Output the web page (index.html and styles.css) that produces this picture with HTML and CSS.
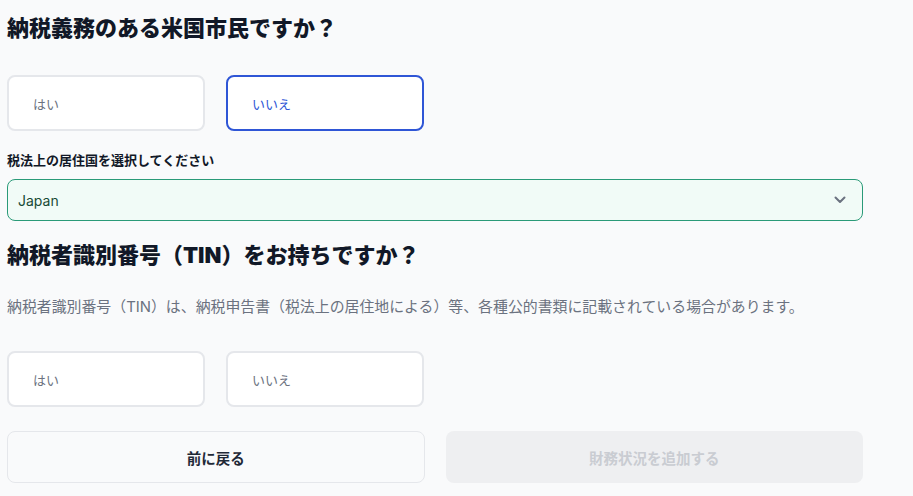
FILE: index.html
```html
<!DOCTYPE html>
<html lang="ja">
<head>
<meta charset="utf-8">
<link rel="stylesheet" href="styles.css">
</head>
<body>
<div class="page">
  <h1 class="title t1">納税義務のある米国市民ですか？</h1>
  <div class="choices c1">
    <button class="choice">はい</button>
    <button class="choice selected">いいえ</button>
  </div>
  <label class="label">税法上の居住国を選択してください</label>
  <div class="select">
    <span class="select-value">Japan</span>
    <svg class="chev" width="12" height="8" viewBox="0 0 12 8"><path d="M1.5 1.5 L6 6 L10.5 1.5" fill="none" stroke="#6b7280" stroke-width="2" stroke-linecap="round" stroke-linejoin="round"/></svg>
  </div>
  <h2 class="title t2">納税者識別番号（TIN）をお持ちですか？</h2>
  <p class="desc">納税者識別番号（TIN）は、納税申告書（税法上の居住地による）等、各種公的書類に記載されている場合があります。</p>
  <div class="choices c2">
    <button class="choice">はい</button>
    <button class="choice">いいえ</button>
  </div>
  <div class="actions">
    <button class="btn back">前に戻る</button>
    <button class="btn next" disabled>財務状況を追加する</button>
  </div>
</div>
</body>
</html>
```
FILE: styles.css
```css
* { box-sizing: border-box; }
html, body {
  margin: 0;
  background: #f9fafb;
}
body {
  font-family: Inter, "Noto Sans CJK JP", sans-serif;
  color: #111827;
}
.page {
  width: 870px;
  padding: 12px 7px 0 7px;
  display: flex;
  flex-direction: column;
}
.title {
  margin: 0;
  font-size: 22px;
  line-height: 32px;
  font-weight: 900;
  color: #111827;
}
.choices {
  display: grid;
  grid-template-columns: 198px 198px;
  gap: 21px;
}
.c1 { margin-top: 31px; }
.choice {
  height: 56px;
  background: #ffffff;
  border: 2px solid #e5e7eb;
  border-radius: 8px;
  text-align: left;
  padding: 0 0 0 24px;
  font-family: Inter, "Noto Sans CJK JP", sans-serif;
  font-size: 13px;
  color: #6b7280;
}
.choice.selected {
  border-color: #2f56d6;
  color: #2f56d6;
}
.label {
  margin-top: 19px;
  font-size: 13px;
  line-height: 20px;
  font-weight: 700;
  color: #111827;
}
.select {
  margin-top: 9px;
  width: 856px;
  height: 42px;
  border: 1px solid #2a9a78;
  border-radius: 8px;
  background: #f1fbf7;
  display: flex;
  align-items: center;
  justify-content: space-between;
  padding: 0 16px 0 10px;
}
.select-value {
  font-size: 14px;
  color: #184a36;
}
.t2 { margin-top: 18px; }
.desc {
  margin: 24px 0 0 0;
  font-size: 14.9px;
  line-height: 24px;
  color: #6b7280;
}
.c2 { margin-top: 32px; }
.actions {
  margin-top: 24px;
  width: 856px;
  display: grid;
  grid-template-columns: 1fr 1fr;
  gap: 21px;
}
.btn {
  height: 52px;
  border-radius: 8px;
  font-family: Inter, "Noto Sans CJK JP", sans-serif;
  font-size: 14.5px;
  font-weight: 700;
}
.back {
  background: #f9fafb;
  border: 1px solid #e5e7eb;
  color: #1f2937;
}
.next {
  background: #eeeff1;
  border: none;
  color: #c9ccd2;
}
```
